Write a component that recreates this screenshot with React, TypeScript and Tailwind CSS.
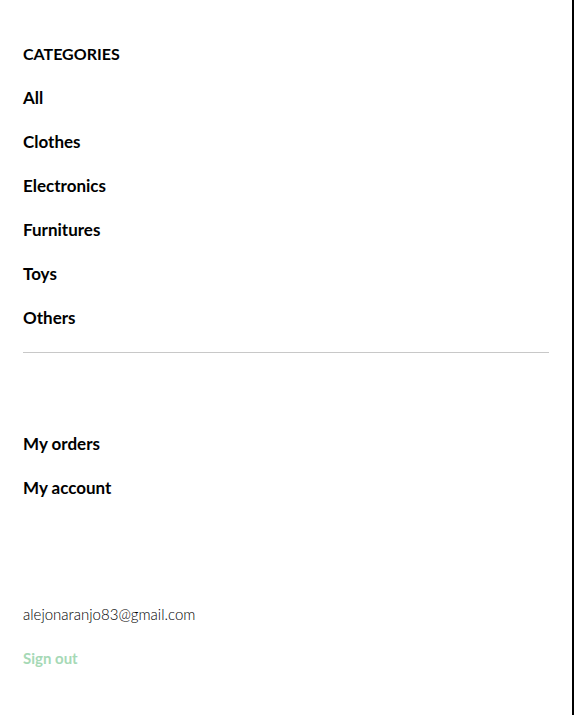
export default function App() {
  const categories = ["All", "Clothes", "Electronics", "Furnitures", "Toys", "Others"];

  return (
    <div className="w-[574px] h-[715px] bg-white border-r-2 border-black font-['Lato',sans-serif] text-black">
      <div className="px-[23px] pt-[42px]">
        <ul className="flex flex-col gap-5 text-[17px] font-bold leading-6">
          <li className="text-base">CATEGORIES</li>
          {categories.map((c) => (
            <li key={c}>{c}</li>
          ))}
        </ul>

        <div className="mt-[22px] border-t border-[#c8c8c8]"></div>

        <ul className="mt-[79px] flex flex-col gap-5 text-[17px] font-bold leading-6">
          <li>My orders</li>
          <li>My account</li>
        </ul>

        <p className="mt-[102px] text-[15px] font-light leading-6">alejonaranjo83@gmail.com</p>
        <p className="mt-5 text-[15px] font-bold leading-6 text-[#a6d9b6]">Sign out</p>
      </div>
    </div>
  );
}
